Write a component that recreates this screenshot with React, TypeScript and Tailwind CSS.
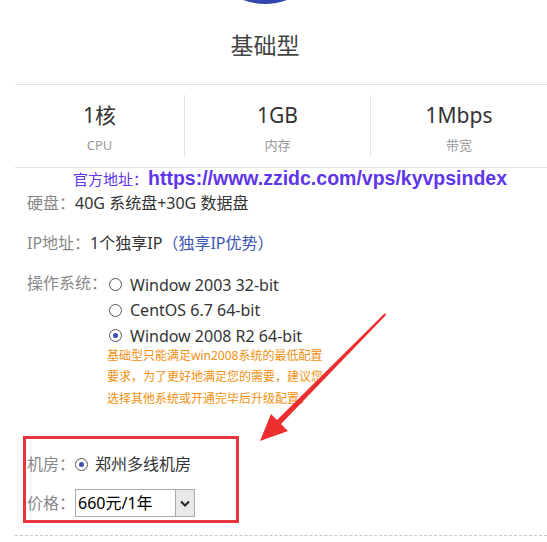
import React from 'react';

const cjk = "font-['Noto_Sans','Noto_Sans_CJK_SC',sans-serif]";

const Radio = ({ checked }: { checked?: boolean }) => (
  <span className="inline-flex w-[13px] h-[13px] shrink-0 items-center justify-center rounded-full border border-[#555] bg-white">
    {checked && <span className="w-[5px] h-[5px] rounded-full bg-[#3a4fae]" />}
  </span>
);

const stats = [
  { value: '1核', label: 'CPU' },
  { value: '1GB', label: '内存' },
  { value: '1Mbps', label: '带宽' },
];

const osList = [
  { name: 'Window 2003 32-bit' },
  { name: 'CentOS 6.7 64-bit' },
  { name: 'Window 2008 R2 64-bit', checked: true },
];

export default function App() {
  return (
    <div className={`relative w-[547px] h-[542px] overflow-hidden bg-white ${cjk}`}>
      {/* top icon */}
      <div className="absolute left-[203px] top-[-120px] w-[124px] h-[124px] rounded-full bg-[#3347b0]" />

      {/* title */}
      <div className="w-[530px] pt-[28px] text-center text-[23px] leading-[34px] text-[#444]">基础型</div>

      {/* stats */}
      <div className="ml-[15px] mt-[22px] grid grid-cols-[169px_186px_1fr] border-y border-[#e2e2e2] py-[10px]">
        {stats.map((s, i) => (
          <div key={s.label} className={`flex flex-col items-center h-[62px] ${i > 0 ? 'border-l border-[#e2e2e2]' : ''}`}>
            <div className="pt-[6px] text-[21px] leading-[28px] text-[#333]">{s.value}</div>
            <div className="mt-[7px] text-[13px] leading-[18px] text-[#999]">{s.label}</div>
          </div>
        ))}
      </div>

      {/* official url */}
      <div className="pl-[73px] flex items-baseline leading-[20px] text-[#5f35ea]">
        <span className="text-[15px]">官方地址：</span>
        <span className="font-['Liberation_Sans',Arial,sans-serif] font-bold text-[19.5px]">https://www.zzidc.com/vps/kyvpsindex</span>
      </div>

      {/* details */}
      <div className="pl-[27px] text-[16px] text-[#333]">
        <div className="flex h-[22px] items-center mt-[3px]">
          <span className="text-[#888]">硬盘：</span>
          <span>40G 系统盘+30G 数据盘</span>
        </div>
        <div className="flex h-[22px] items-center mt-[18px]">
          <span className="text-[#888]">IP地址：</span>
          <span>1个独享IP</span>
          <span className="text-[#3c57b4]">（独享IP优势）</span>
        </div>
        <div className="flex mt-[18px]">
          <span className="text-[#888] h-[22px] leading-[22px] w-[82px]">操作系统：</span>
          <div className="flex flex-col">
            {osList.map((os) => (
              <div key={os.name} className="flex items-center h-[25.5px] gap-[8px] text-[16px] text-[#333]">
                <Radio checked={os.checked} />
                <span>{os.name}</span>
              </div>
            ))}
            <div className="-ml-[2px] mt-[-4px] text-[12px] leading-[21.5px] text-[#f0900f]">
              <div>基础型只能满足win2008系统的最低配置</div>
              <div>要求，为了更好地满足您的需要，建议您</div>
              <div>选择其他系统或开通完毕后升级配置。</div>
            </div>
          </div>
        </div>
      </div>

      {/* room & price */}
      <div className="ml-[23px] mt-[27px] w-[216px] h-[87px] border-[3px] border-[#e8343c] pl-[1px] pt-[14px]">
        <div className="flex items-center h-[22px] text-[16px]">
          <span className="text-[#888]">机房：</span>
          <Radio checked />
          <span className="ml-[7px] text-[16px] text-[#333]">郑州多线机房</span>
        </div>
        <div className="flex items-center mt-[14px] text-[16px]">
          <span className="text-[#888]">价格：</span>
          <div className="flex h-[28px] w-[120px] items-center border border-[#aaa] bg-white">
            <span className="flex-1 pl-[2px] text-[16px] text-black">660元/1年</span>
            <span className="flex h-[26px] w-[19px] items-center justify-center border-l border-[#aaa] bg-[#e8e8e8]">
              <svg width="10" height="7" viewBox="0 0 10 7">
                <path d="M1 1.5 L5 5.5 L9 1.5" fill="none" stroke="#222" strokeWidth="2" />
              </svg>
            </span>
          </div>
        </div>
      </div>

      <div className="ml-[15px] mt-[12px] border-t border-dashed border-[#c8c8c8]" />

      {/* red arrow annotation */}
      <svg className="absolute left-0 top-0 pointer-events-none" width="547" height="542">
        <polygon points="385,313 386,315 281,424 288,431 260,441 271,414 277,420" fill="#ec2e2e" />
      </svg>
    </div>
  );
}
